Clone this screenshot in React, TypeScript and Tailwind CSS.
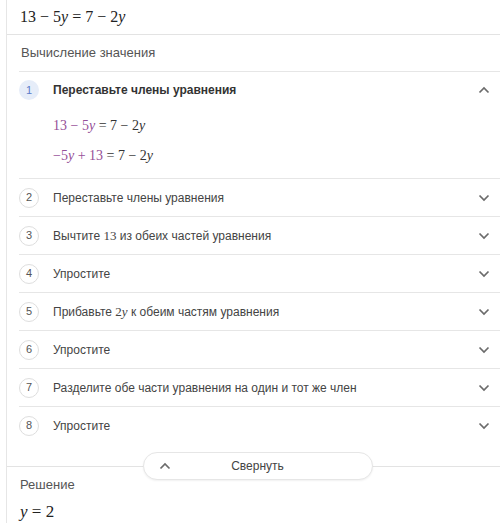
import React from 'react';

const serif = "font-['Liberation_Serif',serif]";

function Chevron({ up = false }: { up?: boolean }) {
  return (
    <svg width="12" height="8" viewBox="0 0 12 8" className="text-[#6b6b6b]">
      <polyline
        points={up ? '1.5,6.5 6,2 10.5,6.5' : '1.5,1.5 6,6 10.5,1.5'}
        fill="none"
        stroke="currentColor"
        strokeWidth="1.7"
      />
    </svg>
  );
}

function Badge({ n, active = false }: { n: number; active?: boolean }) {
  return (
    <div
      className={
        active
          ? 'w-[20px] h-[20px] rounded-full bg-[#e6edf9] text-[#5b7bc9] flex items-center justify-center text-[11px] shrink-0'
          : 'w-[20px] h-[20px] rounded-full border-[1.5px] border-[#dedede] bg-white text-[#555] flex items-center justify-center text-[11px] shrink-0'
      }
    >
      {n}
    </div>
  );
}

function Y() {
  return <i>y</i>;
}

function StepRow({ n, children }: { n: number; children: React.ReactNode }) {
  return (
    <div className="h-[38px] flex items-center border-b border-[#e6e6e6] pr-[10px]">
      <Badge n={n} />
      <div className="ml-[14px] flex-1 text-[12px] text-[#444]">{children}</div>
      <Chevron />
    </div>
  );
}

export default function App() {
  return (
    <div className="w-[500px] h-[523px] bg-white overflow-hidden font-['Liberation_Sans',Arial,sans-serif]">
      <div className="ml-[6px] h-full border-l border-[#e6e6e6]">
        {/* given equation */}
        <div className={`h-[35px] border-b border-[#e3e3e3] pl-[13px] flex items-center text-[16px] text-[#222] ${serif}`}>
          <span>
            13 − 5<Y /> = 7 − 2<Y />
          </span>
        </div>

        <div className="pl-[12px]">
          <div className="h-[37px] flex items-center border-b border-[#e6e6e6] pl-[2px] text-[13px] text-[#555]">
            Вычисление значения
          </div>

          {/* step 1 expanded */}
          <div className="border-b border-[#e6e6e6] pr-[10px] h-[107px]">
            <div className="h-[36px] flex items-center">
              <Badge n={1} active />
              <div className="ml-[14px] flex-1 text-[12px] font-bold text-[#333]">Переставьте члены уравнения</div>
              <Chevron up />
            </div>
            <div className={`pl-[34px] text-[14px] text-[#333] ${serif}`}>
              <div className="h-[20px] mt-[7px] flex items-center">
                <span>
                  <span className="text-[#954f98]">13 − 5<Y /></span> = 7 − 2<Y />
                </span>
              </div>
              <div className="h-[20px] mt-[10px] flex items-center">
                <span>
                  <span className="text-[#954f98]">−5<Y /> + 13</span> = 7 − 2<Y />
                </span>
              </div>
            </div>
          </div>

          <StepRow n={2}>Переставьте члены уравнения</StepRow>
          <StepRow n={3}>
            Вычтите <span className={`${serif} text-[13px]`}>13</span> из обеих частей уравнения
          </StepRow>
          <StepRow n={4}>Упростите</StepRow>
          <StepRow n={5}>
            Прибавьте <span className={`${serif} text-[13px]`}>2<Y /></span> к обеим частям уравнения
          </StepRow>
          <StepRow n={6}>Упростите</StepRow>
          <StepRow n={7}>Разделите обе части уравнения на один и тот же член</StepRow>
          <div className="h-[37px] flex items-center pr-[10px]">
            <Badge n={8} />
            <div className="ml-[14px] flex-1 text-[12px] text-[#444]">Упростите</div>
            <Chevron />
          </div>
        </div>

        <div className="h-[22px]" />

        {/* solution */}
        <div className="relative border-t border-[#e3e3e3] pl-[13px]">
          <div className="absolute left-[136px] -top-[15px] w-[230px] h-[28px] rounded-full border border-[#e6e6e6] bg-white flex items-center shadow-[0_1px_2px_rgba(0,0,0,0.06)]">
            <div className="ml-[15px]">
              <Chevron up />
            </div>
            <div className="flex-1 text-center pr-[28px] text-[12px] text-[#444]">Свернуть</div>
          </div>
          <div className="pt-[10px] h-[26px] leading-[16px] text-[13px] text-[#555]">Решение</div>
          <div className={`mt-[6px] text-[17px] text-[#222] ${serif}`}>
            <Y /> = 2
          </div>
        </div>
      </div>
    </div>
  );
}
